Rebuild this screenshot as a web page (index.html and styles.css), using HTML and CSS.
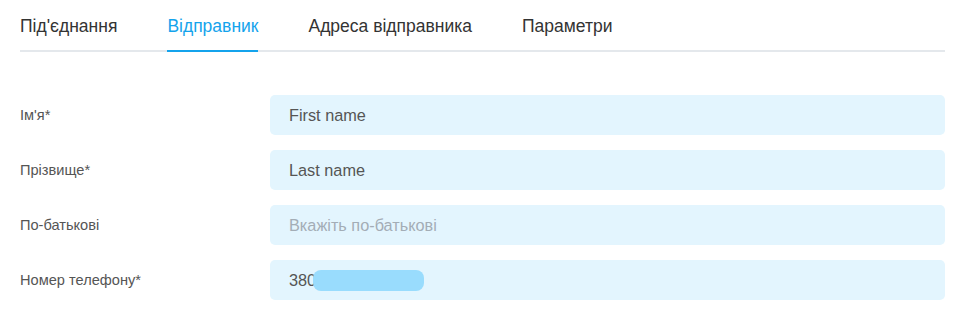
FILE: index.html
```html
<!DOCTYPE html>
<html lang="uk">
<head>
    <meta charset="UTF-8">
    <meta name="viewport" content="width=device-width, initial-scale=1.0">
    <title>Відправник</title>
    <link rel="stylesheet" href="styles.css">
</head>
<body>
    <div class="tabs">
        <div class="tab">Під'єднання</div>
        <div class="tab active">Відправник</div>
        <div class="tab">Адреса відправника</div>
        <div class="tab">Параметри</div>
    </div>

    <form class="sender-form">
        <div class="row">
            <label for="first-name">Ім'я*</label>
            <input id="first-name" type="text" value="First name">
        </div>
        <div class="row">
            <label for="last-name">Прізвище*</label>
            <input id="last-name" type="text" value="Last name">
        </div>
        <div class="row">
            <label for="middle-name">По-батькові</label>
            <input id="middle-name" type="text" placeholder="Вкажіть по-батькові">
        </div>
        <div class="row">
            <label for="phone">Номер телефону*</label>
            <div class="phone-field">
                <span>380</span>
                <span class="blur"></span>
            </div>
        </div>
    </form>
</body>
</html>
```
FILE: styles.css
```css
body {
    margin: 0;
    padding: 0 18px 0 20px;
    font-family: "Liberation Sans", Arial, sans-serif;
    background-color: #ffffff;
    color: #333;
}

.tabs {
    display: flex;
    gap: 50px;
    padding-top: 15px;
    border-bottom: 2px solid #e4e8ec;
}

.tab {
    font-size: 17.5px;
    line-height: 22px;
    padding-bottom: 13px;
    margin-bottom: -2px;
    border-bottom: 2px solid transparent;
    color: #333;
}

.tab.active {
    color: #14a3ec;
    border-bottom-color: #14a3ec;
}

.sender-form {
    padding-top: 43px;
    display: flex;
    flex-direction: column;
    gap: 15px;
}

.row {
    display: flex;
    align-items: center;
}

.row label {
    width: 250px;
    font-size: 14.6px;
    color: #555;
}

.row input,
.phone-field {
    flex: 1;
    height: 40px;
    box-sizing: border-box;
    border: none;
    border-radius: 5px;
    background-color: #e3f5fe;
    padding: 0 19px;
    font-family: inherit;
    font-size: 16.3px;
    color: #555;
    outline: none;
}

.row input::placeholder {
    color: #a3adb6;
}

.phone-field {
    display: flex;
    align-items: center;
}

.blur {
    display: inline-block;
    width: 111px;
    height: 21px;
    border-radius: 8px;
    background-color: #99dcfd;
    margin-left: -3px;
}
```
